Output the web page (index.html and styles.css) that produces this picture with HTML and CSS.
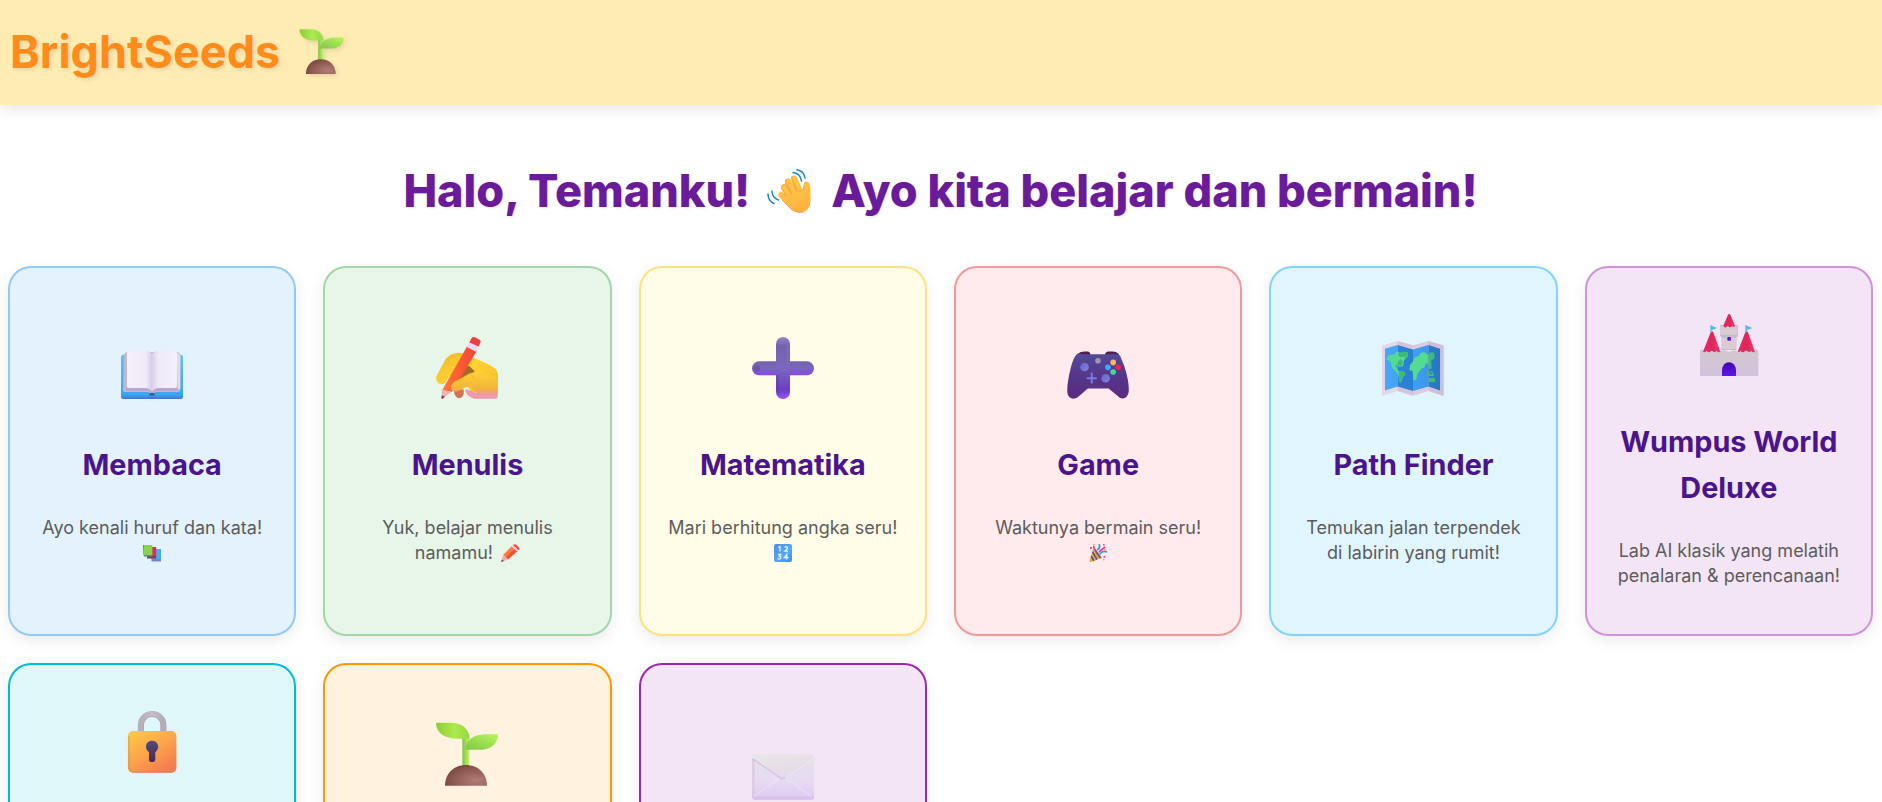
FILE: index.html
```html
<!DOCTYPE html>
<html lang="id">
<head>
<meta charset="utf-8">
<title>BrightSeeds</title>
<link rel="stylesheet" href="styles.css">
</head>
<body>
<svg class="defs" width="0" height="0" aria-hidden="true">
  <defs>
    <linearGradient id="leafA"><stop offset="0" stop-color="#8bce32"/><stop offset=".55" stop-color="#aceb50"/><stop offset="1" stop-color="#94d945"/></linearGradient>
    <linearGradient id="leafB" x1="0" y1="1" x2="1" y2="0"><stop offset="0" stop-color="#82c54c"/><stop offset="1" stop-color="#b6f759"/></linearGradient>
    <linearGradient id="stem"><stop offset="0" stop-color="#83bd54"/><stop offset=".5" stop-color="#a2dd4f"/><stop offset="1" stop-color="#c1f565"/></linearGradient>
    <radialGradient id="soil" cx=".75" cy=".75" r=".8"><stop offset="0" stop-color="#b07d74"/><stop offset=".6" stop-color="#945e58"/><stop offset="1" stop-color="#784a40"/></radialGradient>
    <linearGradient id="page"><stop offset="0" stop-color="#f4f0fa"/><stop offset=".75" stop-color="#f0ebf8"/><stop offset="1" stop-color="#d6cbe8"/></linearGradient>
    <linearGradient id="pageR"><stop offset="0" stop-color="#d9cfea"/><stop offset=".25" stop-color="#eee9f7"/><stop offset="1" stop-color="#f4f0fa"/></linearGradient>
    <linearGradient id="cover" x1="0" y1="0" x2="0" y2="1"><stop offset="0" stop-color="#54c8f2"/><stop offset=".9" stop-color="#3ba7f0"/><stop offset="1" stop-color="#4475d4"/></linearGradient>
    <linearGradient id="skin" x1="0" y1="0" x2="1" y2="1"><stop offset="0" stop-color="#eeb62c"/><stop offset=".45" stop-color="#ffd332"/><stop offset=".8" stop-color="#f6c22c"/><stop offset="1" stop-color="#f29d6e"/></linearGradient>
    <linearGradient id="cuff" x1="0" y1="0" x2="0" y2="1"><stop offset="0" stop-color="#ffd034"/><stop offset=".75" stop-color="#f2b43c"/><stop offset="1" stop-color="#ef94a4"/></linearGradient>
    <linearGradient id="pencil"><stop offset="0" stop-color="#ff7b35"/><stop offset=".55" stop-color="#ff5733"/><stop offset="1" stop-color="#e54841"/></linearGradient>
    <linearGradient id="plusV" x1="0" y1="0" x2="0" y2="1"><stop offset="0" stop-color="#9384c8"/><stop offset=".15" stop-color="#7461ae"/><stop offset=".5" stop-color="#7c68bd"/><stop offset=".85" stop-color="#6b3fc4"/><stop offset="1" stop-color="#9b50f8"/></linearGradient>
    <linearGradient id="plusH" x1="0" y1="0" x2="0" y2="1"><stop offset="0" stop-color="#7563a9"/><stop offset=".5" stop-color="#7866bb"/><stop offset="1" stop-color="#8745ee"/></linearGradient>
    <linearGradient id="pad" x1="0" y1="0" x2="0" y2="1"><stop offset="0" stop-color="#544a98"/><stop offset=".6" stop-color="#543388"/><stop offset="1" stop-color="#5f2b80"/></linearGradient>
    <linearGradient id="knob" x1="0" y1="0" x2="1" y2="1"><stop offset="0" stop-color="#6164c0"/><stop offset="1" stop-color="#8583e8"/></linearGradient>
    <linearGradient id="sea"><stop offset="0" stop-color="#47a7f8"/><stop offset="1" stop-color="#3d98ed"/></linearGradient>
    <linearGradient id="seaDark"><stop offset="0" stop-color="#2c83d5"/><stop offset="1" stop-color="#2679c7"/></linearGradient>
    <linearGradient id="wall" x1="0" y1="0" x2="0" y2="1"><stop offset="0" stop-color="#d3c8ce"/><stop offset="1" stop-color="#d3c2df"/></linearGradient>
    <linearGradient id="roof"><stop offset="0" stop-color="#e32c6b"/><stop offset=".5" stop-color="#dd2758"/><stop offset="1" stop-color="#f03a70"/></linearGradient>
    <linearGradient id="gate" x1="0" y1="0" x2="0" y2="1"><stop offset="0" stop-color="#4205ae"/><stop offset="1" stop-color="#6315eb"/></linearGradient>
    <linearGradient id="lockBody" x1="0" y1="0" x2=".7" y2="1"><stop offset="0" stop-color="#ffcb48"/><stop offset=".55" stop-color="#fba34b"/><stop offset="1" stop-color="#f67b50"/></linearGradient>
    <linearGradient id="steel"><stop offset="0" stop-color="#b5b1b6"/><stop offset=".5" stop-color="#c6bdcc"/><stop offset="1" stop-color="#b1adb2"/></linearGradient>
    <linearGradient id="keyhole" x1="0" y1="0" x2="0" y2="1"><stop offset="0" stop-color="#514b83"/><stop offset="1" stop-color="#482950"/></linearGradient>
    <linearGradient id="mail" x1="0" y1="0" x2="0" y2="1"><stop offset="0" stop-color="#e6e1e8"/><stop offset=".6" stop-color="#e6dbf2"/><stop offset="1" stop-color="#dfc9f3"/></linearGradient>
    <linearGradient id="flap" x1="0" y1="0" x2=".5" y2="1"><stop offset="0" stop-color="#ebe6e5"/><stop offset="1" stop-color="#e4d9ea"/></linearGradient>
    <linearGradient id="palm" x1="0" y1="0" x2=".5" y2="1"><stop offset="0" stop-color="#f5b73a"/><stop offset=".5" stop-color="#ffc043"/><stop offset="1" stop-color="#ffb140"/></linearGradient>
    <linearGradient id="numBlue" x1="0" y1="0" x2="1" y2="1"><stop offset="0" stop-color="#4c8fe8"/><stop offset=".6" stop-color="#55a8fb"/><stop offset="1" stop-color="#4387e6"/></linearGradient>

    <symbol id="sprout" viewBox="0 0 186 190">
      <path fill="url(#stem)" d="M79 42H100V135H79Z"/>
      <path fill="url(#leafA)" d="M0 4Q0 1 4 1H50C80 2 100 22 101 49H62C26 48 2 32 0 4Z"/>
      <path fill="url(#leafB)" d="M186 39Q186 36 182 36H146C112 38 89 52 88 82H138C168 81 184 63 186 39Z"/>
      <path fill="url(#soil)" d="M27 190C27 153 54 128 90 128S153 153 153 190Z"/>
    </symbol>

    <symbol id="book" viewBox="0 0 186 186" overflow="visible">
      <rect y="53" width="186" height="133" rx="7" fill="url(#cover)"/>
      <path fill="#4475d4" d="M80 180H106V184Q102 192 93 192T80 184Z"/>
      <path fill="#c3b7d0" d="M9 55Q9 46 20 45H166Q177 46 178 55V156Q178 165 170 165H104L93 174L82 165H14Q6 165 6 158Z"/>
      <path fill="#bca4cf" d="M14 152H171V162H103L93 170L83 162H14Z"/>
      <path fill="#e2dbea" d="M167 46L178 55V156L170 157Z"/>
      <path fill="url(#page)" d="M18 47Q18 41 24 41H76Q89 42 93 51V164Q86 154 76 153H24Q18 153 18 148Z"/>
      <path fill="url(#pageR)" d="M168 47Q168 41 162 41H110Q97 42 93 51V164Q100 154 110 153H162Q168 153 168 148Z"/>
      <ellipse cx="93" cy="172" rx="9" ry="5" fill="#2c64a4"/>
    </symbol>

    <symbol id="writing" viewBox="0 0 188 188">
      <path fill="url(#skin)" d="M53 51Q67 45 81 49L154 80Q188 96 188 112V170L110 168L75 126L42 118L28 138Q20 146 8 141Q-2 134 1 120L28 69Q38 55 53 51Z"/>
      <path fill="#a56a28" d="M91 85Q110 91 118 107L82 125L70 130Z"/>
      <path fill="#cf7350" d="M54 164Q65 157 84 159V172Q81 185 69 186Q57 183 54 164Z"/>
      <path fill="#ed9aac" d="M88 158Q104 160 120 170H187V181Q187 187 180 187H115Q90 180 88 158Z"/>
      <path fill="url(#pencil)" d="M94 29L124 42L48 167L19 161Z"/>
      <path fill="#f2d7f5" d="M101 16L129 29L121 45L94 30Z"/>
      <path fill="#ed3f42" d="M108 3Q112 -1 118 1L132 8Q137 11 135 16L129 29L101 17Z"/>
      <path fill="#efb4b0" d="M18 160L46 167L20 187L17 183Z"/>
      <path fill="#703e65" d="M18 177L27 181L19 188L16 186Z"/>
      <path fill="url(#cuff)" d="M102 111Q126 101 147 109L188 124V164Q188 175 176 175L138 174Q124 173 109 155Q97 145 78 159L62 165Q47 166 45 152Q46 140 62 133Z"/>
      <path fill="none" stroke="#e6a526" stroke-width="3" opacity=".6" d="M62 134L102 111Q112 116 116 129"/>
    </symbol>

    <symbol id="plus" viewBox="0 0 186 186">
      <rect y="73" width="186" height="42" rx="21" fill="url(#plusH)"/>
      <rect x="72" width="42" height="186" rx="21" fill="url(#plusV)"/>
      <path fill="#8b76c3" opacity=".55" d="M105 82V22Q105 12 98 10Q109 10 110 24V78H160Q127 79 105 82Z"/>
      <path fill="#55309d" opacity=".35" d="M72 115H81V170Q73 165 72 155Z"/>
      <circle cx="15" cy="94" r="10" fill="#4d377e" opacity=".3"/>
    </symbol>

    <symbol id="gamepad" viewBox="0 0 188 186">
      <path fill="#512051" d="M31 51Q39 43 52 43H62Q71 43 71 54H31ZM115 54Q116 43 126 43H138Q151 43 158 53V57Z"/>
      <path fill="url(#pad)" d="M31 50Q37 49 48 51H140Q153 48 161 56L174 88Q190 139 187 166Q184 183 172 185Q161 187 153 177L126 155H63L37 178Q30 186 18 186Q3 184 1 168Q-1 142 12 90Q20 60 31 50Z"/>
      <circle cx="53" cy="90" r="13" fill="url(#knob)"/>
      <circle cx="117" cy="124" r="13" fill="url(#knob)"/>
      <circle cx="94" cy="71" r="8.500" fill="#a394b2"/>
      <path stroke="#7d77e8" stroke-width="6" stroke-linecap="round" d="M75 110V138M62 124H88"/>
      <circle cx="140" cy="76" r="8.500" fill="#f9b954"/><circle cx="124" cy="91" r="8.500" fill="#3faafa"/>
      <circle cx="155" cy="91" r="8.500" fill="#ee2350"/><circle cx="140" cy="105" r="8.500" fill="#38e189"/>
    </symbol>

    <symbol id="map" viewBox="0 0 188 186">
      <path fill="#e4d7ea" d="M0 29Q0 25 4 24L47 11L94 24V177L47 163L3 177Q0 177 0 173Z"/>
      <path fill="#dacbe3" d="M94 24L141 11L184 24Q187 25 187 29V174Q187 178 183 177L141 163L94 177Z"/>
      <path fill="#c6b6ce" d="M47 11L94 24V177L47 163ZM141 11L187 25V177L141 163Z" opacity=".55"/>
      <path fill="url(#sea)" d="M9 35L47 23V149L9 161ZM94 37L141 23V149L94 163Z"/>
      <path fill="url(#seaDark)" d="M47 23L94 37V163L47 149ZM141 23L176 35V161L141 149Z"/>
      <path fill="#53dc91" d="M13 66L20 54L36 53L45 44L61 49L74 44Q81 48 78 59L67 69L64 87L53 90L45 81L40 89L51 102L67 104L71 113L63 120L58 137L53 136L51 119L46 108L30 92L26 74Z"/>
      <path fill="#3fb979" d="M48 48Q64 40 78 46Q82 59 67 69L71 59L53 60ZM47 75L56 65L64 73L60 87L48 84ZM51 103L68 105L71 114L61 122L57 136L51 134Z"/>
      <path fill="#53dc91" d="M93 75L99 62L112 55L120 45L130 46L141 55V83L133 76L128 92L120 95L108 110L103 130L95 129L93 103L83 99L85 84Z"/>
      <path fill="#3fba7e" d="M141 51L147 45L158 46L160 63L149 71L151 94L144 98L141 87ZM134 102L142 104L151 101L157 111L158 118L140 117ZM142 124L158 122L161 126V136H142Z"/>
      <path fill="#2679c7" d="M141 106L153 107L150 112Z"/>
    </symbol>

    <symbol id="castle" viewBox="0 0 186 186">
      <path fill="#c6bbc6" d="M66 33H118Q120 33 120 37V66L115 70V108H71V70L66 66Z"/>
      <path fill="#d8ccd2" d="M66 36H118V63H66ZM71 71H115V105H71Z"/>
      <path fill="url(#wall)" d="M8 107H54L63 114L77 108L93 114L108 108L121 114L132 107H178Q181 107 181 111V186H6V111Q6 107 8 107Z"/>
      <path fill="url(#roof)" d="M38 55Q42 49 46 55L67 113Q60 118 55 110Q51 117 46 113Q41 107 36 113Q31 118 26 110Q22 117 15 113Z"/>
      <path fill="url(#roof)" d="M142 55Q146 49 150 55L171 113Q164 118 160 110Q154 117 149 112Q144 107 139 113Q133 118 128 110Q124 116 119 113Z"/>
      <path fill="url(#roof)" d="M90 2Q93 -2 97 2L111 35Q107 43 102 36Q98 42 93 38Q88 34 84 40Q78 42 76 35Z"/>
      <path fill="#55bbe4" d="M37 33L57 42L41 49V56H37ZM142 33L163 42L146 49V56H142Z"/>
      <rect x="88" y="69" width="11" height="11" rx="3" fill="#5b14cf"/>
      <path fill="url(#gate)" d="M72 186V168Q75 145 93 145T114 168V186Z"/>
    </symbol>

    <symbol id="lock" viewBox="0 0 186 188">
      <path fill="none" stroke="url(#steel)" stroke-width="18" d="M59 66V43A34.500 34.500 0 0 1 128 43V66"/>
      <path fill="none" stroke="#a58ab8" stroke-width="3" opacity=".6" d="M67 61V43A26.500 26.500 0 0 1 120 43V61"/>
      <rect x="20" y="61" width="147" height="126" rx="15" fill="url(#lockBody)"/>
      <path fill="none" stroke="#d78e3d" stroke-width="3" opacity=".7" d="M23 76V172Q24 184 36 184"/>
      <path fill="none" stroke="#ef6f69" stroke-width="3" opacity=".7" d="M32 185H152Q165 184 165 171"/>
      <path fill="url(#keyhole)" d="M93 90C105 90 112 99 112 109Q111 119 103 125V147Q102 155 93 155T84 147V125Q75 119 75 108C75 98 82 90 93 90Z"/>
    </symbol>

    <symbol id="envelope" viewBox="0 0 186 136">
      <rect width="186" height="136" rx="9" fill="url(#mail)"/>
      <path fill="#dac1ec" d="M0 122L7 126H179L186 122V128Q185 136 177 136H9Q1 135 0 128Z"/>
      <path fill="#dac8dc" opacity=".7" d="M0 10L8 14V128L0 125Z"/>
      <path fill="url(#flap)" d="M4 5Q7 0 15 0H174Q184 1 186 9L101 68Q91 75 81 67L2 13Z"/>
      <path fill="none" stroke="#d5bae8" stroke-width="4" opacity=".8" d="M3 14L81 68Q90 76 101 69"/>
      <path fill="none" stroke="#f1eaf3" stroke-width="2" d="M100 70L185 12M5 126L81 72M103 73L179 127"/>
    </symbol>

    <symbol id="wave" viewBox="0 0 44 44">
      <g fill="none" stroke-linecap="round" stroke-width="6">
        <g stroke="#f4b43a"><path d="M14.500 26L23 34"/><path d="M17 18L26 31"/><path d="M21 12.500L29 27"/><path d="M27 9.500L33 23"/></g>
        <g stroke="#ffc244" stroke-width="4.500"><path d="M14 25L23 34"/><path d="M17 18L26 31"/><path d="M22 12L30 27"/><path d="M27.500 9.500L34 23"/></g>
      </g>
      <path fill="url(#palm)" d="M17 28L32 20Q37 22 36.500 16Q37 12 40 12.500Q43.500 14 43.500 20V32Q43 40 37 43Q31 45 25 41L15 31Z"/>
      <path fill="none" stroke="#ec9850" stroke-width=".8" d="M14 19L20 28M18 14L25 26M25 11L30 23M32 22Q36 24 37 17"/>
      <path fill="none" stroke="#f78958" stroke-width="1" opacity=".7" d="M15 31L25 41Q30 44 36 43"/>
      <path fill="none" stroke="#2186c4" stroke-width="1.500" stroke-linecap="round" d="M26 3.500Q33 4 34.500 12M30 .8Q37 2 38 9M5 22Q5 29 11.500 31M1 25Q1 32 7 34.500"/>
    </symbol>

    <symbol id="books" viewBox="0 0 18 18">
      <path fill="#3fb3ed" d="M8 5H18V15H8Z"/><path fill="#7584cc" d="M8.500 15H18V17.500H9Q8 17 8.500 15Z"/>
      <path fill="#e5295f" d="M4 3H13.200V13H4Z"/><path fill="#9c315f" d="M4 12H13.200V14.500H4Z"/>
      <path fill="#84d650" d="M0 1H9.400V11.500H0Z"/><path fill="#479b6c" d="M0 1H1V12.500H9.400V11H1Z"/>
    </symbol>
    <symbol id="crayon" viewBox="0 0 19 18">
      <path fill="#ff7b3d" d="M2 11L11 2L16.500 7L7 15.500Z"/><path fill="#e95342" d="M14 4.500L16.500 7L7 15.500L5 13Z"/>
      <path fill="#e8c9e9" d="M10.500 2.500L12 1L17.500 6.200L16 7.500Z"/><path fill="#f14b43" d="M12 1Q13.500 -.5 15 .6L18 3.500Q19.500 5 17.500 6.300Z"/>
      <path fill="#eeb0a4" d="M2 11L7 15.500L.3 18Z"/><path fill="#71405f" d="M1 15.500L3 17L0 18Z"/>
    </symbol>
    <symbol id="numbers" viewBox="0 0 18 18">
      <rect width="18" height="18" rx="2" fill="url(#numBlue)"/>
      <path fill="none" stroke="#e8f3ff" stroke-width="1.300" d="M4.300 3.400L6 2.500V7.500M10.500 3.500Q12 2 13.300 3.200Q14 4.500 10.800 7.200H14M4 10.400H6.800L5.300 12Q7.500 12.500 6.500 14.500Q5 15.500 3.700 14.500M12.800 15.500V10.500L10.300 13.700H14.500"/>
    </symbol>
    <symbol id="party" viewBox="0 0 18 18">
      <path fill="#efa62d" d="M4 5Q10 7 13 14L1.500 18Q.2 18 .6 16.500Z"/>
      <path stroke="#4d58a8" stroke-width="1.600" d="M3.500 8L8 15.500M2.200 12L5 17M6 6L11.500 14"/>
      <path fill="none" stroke="#2e9ce5" stroke-width="1.700" d="M8 6Q12 4 10 0M11 10Q14 6 18 8"/>
      <path fill="none" stroke="#ef35a0" stroke-width="1.700" d="M5 2Q4 4 7 7M10 8L16 3"/>
      <path fill="#ec3c9d" d="M1 3h1.800v1.800H1zM14.500 12h1.800v1.800h-1.800zM14 0h1.600v1.600H14z"/>
      <path fill="#f2ae48" d="M4 0h1.600v1.600H4zM15 5h2v2h-2zM14 15h1.500v1.500H14z"/>
    </symbol>
  </defs>
</svg>

<header class="topbar">
  <div class="brand"><span>BrightSeeds</span><svg class="brand-icon"><use href="#sprout"/></svg></div>
</header>

<main class="page">
  <h1 class="greeting"><span>Halo, Temanku!</span><svg class="greeting-icon"><use href="#wave"/></svg><span>Ayo kita belajar dan bermain!</span></h1>

  <section class="menu">
    <article class="card reading">
      <svg class="card-icon"><use href="#book"/></svg>
      <h2 class="card-title">Membaca</h2>
      <p class="card-text">Ayo kenali huruf dan kata! <svg class="emoji"><use href="#books"/></svg></p>
    </article>
    <article class="card writing">
      <svg class="card-icon"><use href="#writing"/></svg>
      <h2 class="card-title">Menulis</h2>
      <p class="card-text">Yuk, belajar menulis namamu! <svg class="emoji pencil"><use href="#crayon"/></svg></p>
    </article>
    <article class="card math">
      <svg class="card-icon"><use href="#plus"/></svg>
      <h2 class="card-title">Matematika</h2>
      <p class="card-text">Mari berhitung angka seru! <svg class="emoji"><use href="#numbers"/></svg></p>
    </article>
    <article class="card game">
      <svg class="card-icon"><use href="#gamepad"/></svg>
      <h2 class="card-title">Game</h2>
      <p class="card-text">Waktunya bermain seru!<br><svg class="emoji"><use href="#party"/></svg></p>
    </article>
    <article class="card path">
      <svg class="card-icon"><use href="#map"/></svg>
      <h2 class="card-title">Path Finder</h2>
      <p class="card-text">Temukan jalan terpendek di labirin yang rumit!</p>
    </article>
    <article class="card wumpus">
      <svg class="card-icon"><use href="#castle"/></svg>
      <h2 class="card-title">Wumpus World Deluxe</h2>
      <p class="card-text">Lab AI klasik yang melatih penalaran &amp; perencanaan!</p>
    </article>
    <article class="card locked">
      <svg class="card-icon"><use href="#lock"/></svg>
    </article>
    <article class="card garden">
      <svg class="card-icon"><use href="#sprout"/></svg>
    </article>
    <article class="card message">
      <svg class="card-icon"><use href="#envelope"/></svg>
    </article>
  </section>
</main>
</body>
</html>
```

FILE: styles.css
```css
* { box-sizing: border-box; }

body {
  margin: 0;
  height: 802px;
  overflow: hidden;
  background: #fff;
  font-family: Inter, "Noto Sans", sans-serif;
  font-size: 18px;
  color: #5c5c5c;
}

.defs { display: block; position: absolute; }

.topbar {
  height: 105px;
  padding: 0 10px 2px;
  display: flex;
  align-items: center;
  background: #ffecb3;
  box-shadow: 0 4px 15px rgba(0, 0, 0, .1);
}

.brand {
  display: flex;
  align-items: center;
  gap: 19px;
  font-size: 45px;
  font-weight: 700;
  line-height: 72px;
  color: #ff8c1a;
  text-shadow: 2px 2px 4px rgba(0, 0, 0, .1);
}

.brand-icon {
  width: 45px;
  height: 45px;
  filter: drop-shadow(2px 2px 2px rgba(0, 0, 0, .1));
}

.page { padding: 50px 9px 0 8px; }

.greeting {
  margin: 0 0 39px;
  display: flex;
  justify-content: center;
  align-items: center;
  font-size: 45px;
  font-weight: 800;
  line-height: 72px;
  color: #6a1b9a;
  text-shadow: 1px 1px 3px rgba(0, 0, 0, .1);
}

.greeting-icon {
  width: 44px;
  height: 44px;
  margin: 0 20px 0 17px;
}

.menu {
  display: grid;
  grid-template-columns: repeat(6, 1fr);
  grid-auto-rows: 370px;
  gap: 27px;
}

.card {
  display: flex;
  flex-direction: column;
  align-items: center;
  justify-content: center;
  padding: 0 27px;
  border: 2px solid;
  border-radius: 23px;
  box-shadow: 0 5px 15px rgba(0, 0, 0, .08);
  text-align: center;
}

.card-icon {
  flex: none;
  width: 62px;
  height: 62px;
  margin-bottom: 43px;
}

.card-title {
  margin: 0 0 27px;
  font-size: 28.8px;
  font-weight: 700;
  line-height: 46px;
  color: #4a148c;
}

.card-text {
  margin: 0;
  font-size: 18px;
  line-height: 25.2px;
}

.emoji {
  width: 18px;
  height: 18px;
  vertical-align: -3px;
}

.pencil { width: 19px; margin-left: 3px; }

.reading { background: #e3f2fd; border-color: #90caf9; }
.writing { background: #e8f5e9; border-color: #a5d6a7; }
.math { background: #fffde7; border-color: #ffe082; }
.game { background: #ffebee; border-color: #ef9a9a; }
.path { background: #e1f5fe; border-color: #81d4fa; }
.wumpus { background: #f3e5f5; border-color: #ce93d8; }
.locked { background: #e0f7fa; border-color: #00bcd4; }
.garden { background: #fff3e0; border-color: #ff9800; }
.message { background: #f3e5f5; border-color: #9c27b0; }

.locked, .garden, .message { justify-content: flex-start; }
.locked { padding-top: 46px; }
.garden { padding-top: 57px; }
.message { padding-top: 81px; }
.garden .card-icon { height: 64px; }
```
